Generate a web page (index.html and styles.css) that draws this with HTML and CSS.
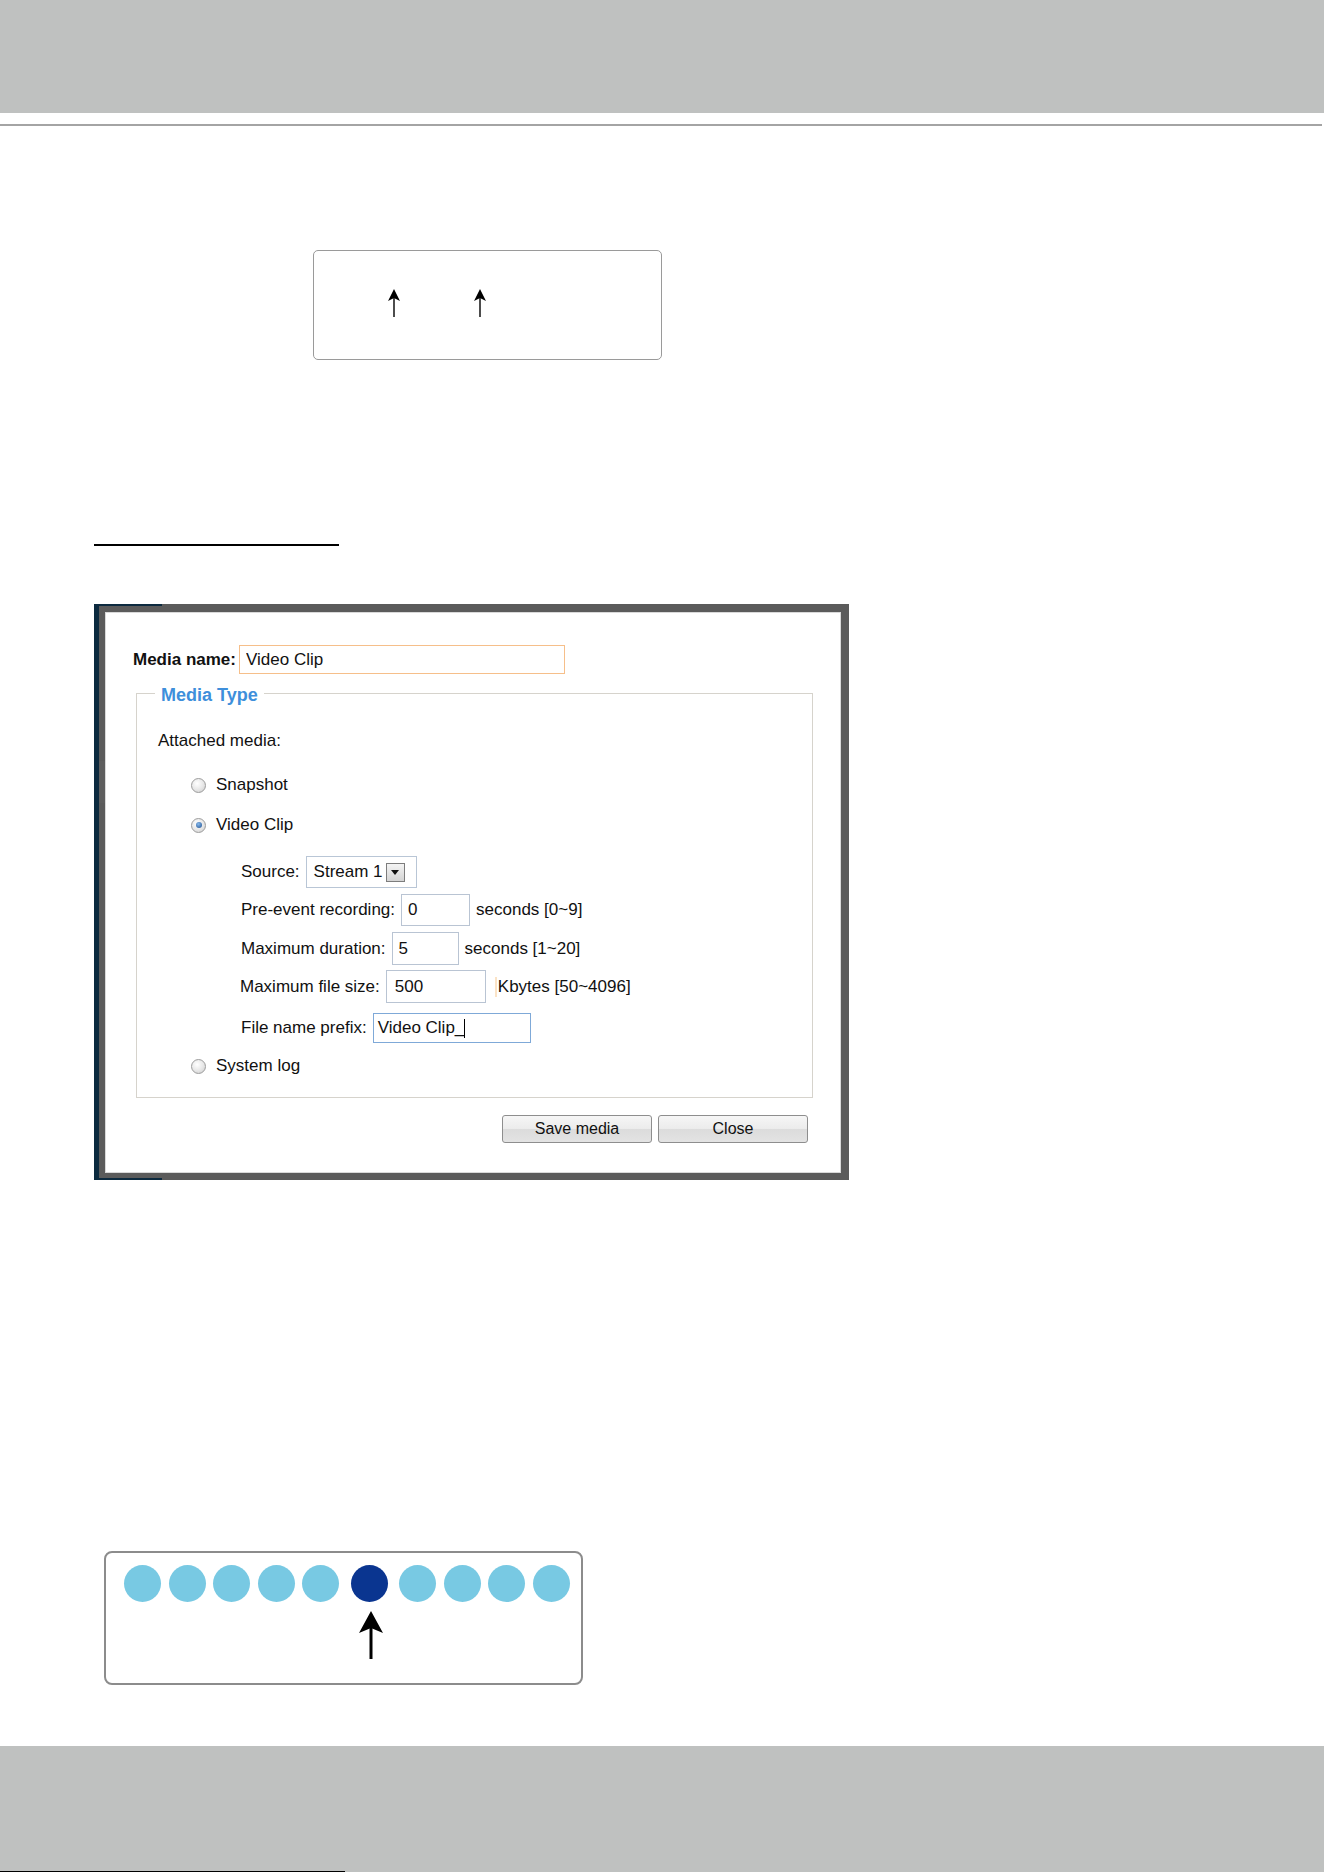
FILE: index.html
```html
<!DOCTYPE html>
<html lang="en">
<head>
<meta charset="utf-8">
<title>Media settings</title>
<link rel="stylesheet" href="styles.css">
</head>
<body>
<header class="page-head"></header>
<div class="head-rule"></div>

<div class="diagram diagram-top">
  <svg class="arrow-sm" viewBox="0 0 12 28" width="12" height="28" aria-hidden="true">
    <path d="M6 0 L12 12 L6 9 L0 12 Z" fill="#000"/>
    <line x1="6" y1="9" x2="6" y2="28" stroke="#000" stroke-width="1.4"/>
  </svg>
  <svg class="arrow-sm arrow-sm-2" viewBox="0 0 12 28" width="12" height="28" aria-hidden="true">
    <path d="M6 0 L12 12 L6 9 L0 12 Z" fill="#000"/>
    <line x1="6" y1="9" x2="6" y2="28" stroke="#000" stroke-width="1.4"/>
  </svg>
</div>

<div class="section-rule"></div>

<div class="dialog">
  <div class="dialog-body">
    <div class="name-row">
      <label class="name-label" for="media-name">Media name:</label>
      <input id="media-name" class="field field-name" type="text" value="Video Clip">
    </div>

    <fieldset class="media-type">
      <legend>Media Type</legend>
      <div class="row row-attached">Attached media:</div>
      <label class="row radio-row row-snap"><span class="radio"></span>Snapshot</label>
      <label class="row radio-row row-clip"><span class="radio radio-on"></span>Video Clip</label>

      <div class="sub row-source">
        <span>Source:</span>
        <span class="select"><span class="select-text">Stream 1</span><span class="select-btn"><svg viewBox="0 0 8 5" width="8" height="5" aria-hidden="true"><path d="M0 0 H8 L4 5 Z" fill="#111"/></svg></span></span>
      </div>
      <div class="sub row-pre">
        <span>Pre-event recording:</span>
        <span class="field field-pre">0</span>
        <span class="hint">seconds [0~9]</span>
      </div>
      <div class="sub row-dur">
        <span>Maximum duration:</span>
        <span class="field field-dur">5</span>
        <span class="hint">seconds [1~20]</span>
      </div>
      <div class="sub row-size">
        <span>Maximum file size:</span>
        <span class="field field-size">500</span>
        <span class="hint hint-mark">Kbytes [50~4096]</span>
      </div>
      <div class="sub row-prefix">
        <span>File name prefix:</span>
        <span class="field field-prefix">Video Clip_<span class="caret"></span></span>
      </div>

      <label class="row radio-row row-log"><span class="radio"></span>System log</label>
    </fieldset>

    <div class="actions">
      <button class="btn" type="button">Save media</button>
      <button class="btn" type="button">Close</button>
    </div>
  </div>
</div>

<div class="diagram diagram-dots">
  <div class="dots">
    <span class="dot"></span>
    <span class="dot"></span>
    <span class="dot"></span>
    <span class="dot"></span>
    <span class="dot"></span>
    <span class="dot dot-active"></span>
    <span class="dot"></span>
    <span class="dot"></span>
    <span class="dot"></span>
    <span class="dot"></span>
  </div>
  <svg class="arrow-lg" viewBox="0 0 24 48" width="24" height="48" aria-hidden="true">
    <path d="M12 0 L24 22 L12 17 L0 22 Z" fill="#000"/>
    <line x1="12" y1="17" x2="12" y2="48" stroke="#000" stroke-width="3"/>
  </svg>
</div>

<footer class="page-foot"><div class="foot-rule"></div></footer>
</body>
</html>
```

FILE: styles.css
```css
html, body {
  margin: 0;
  padding: 0;
  background: #fff;
}

body {
  width: 1324px;
  height: 1872px;
  position: relative;
  font-family: "Liberation Sans", Arial, sans-serif;
  color: #111;
}

/* page header band and rule */
.page-head {
  height: 113px;
  background: #bfc1c0;
}

.head-rule {
  margin-top: 11px;
  width: 1322px;
  height: 2px;
  background: #a4a4a4;
}

/* small outlined diagram with two arrows */
.diagram-top {
  margin: 124px 0 0 313px;
  width: 349px;
  height: 110px;
  box-sizing: border-box;
  border: 1.5px solid #9a9a9a;
  border-radius: 5px;
  display: flex;
  align-items: flex-start;
  padding: 38px 0 0 74px;
}

.arrow-sm {
  display: block;
}

.arrow-sm-2 {
  margin-left: 74px;
}

.section-rule {
  margin: 184px 0 0 94px;
  width: 245px;
  height: 2px;
  background: #000;
}

/* dialog window capture */
.dialog {
  position: relative;
  margin: 58px 0 0 94px;
  width: 755px;
  box-sizing: border-box;
  padding: 8px 8px 7px 6px;
  border-left: 5px solid #0c2a3f;
  background:
    linear-gradient(#5e5e5e, #5e5e5e) left 0 top 157px / 6px 42px no-repeat,
    #5b5b5b;
}

.dialog::before,
.dialog::after {
  content: "";
  position: absolute;
  left: -5px;
  width: 68px;
  background: #0c2a3f;
}

.dialog::before {
  top: 0;
  height: 2px;
}

.dialog::after {
  bottom: 0;
  height: 2px;
}

.dialog-body {
  background: #fff;
  height: 561px;
  box-sizing: border-box;
  border: 1px solid #d9d9d9;
  padding: 32px 28px 0 27px;
  font-size: 17px;
}

.name-row {
  display: flex;
  align-items: center;
  gap: 3px;
  height: 29px;
}

.name-label {
  font-weight: bold;
  font-size: 17px;
  color: #111;
}

.field {
  box-sizing: border-box;
  font: inherit;
  font-size: 17px;
  color: #111;
  background: #fff;
  border: 1px solid #b9c4d3;
  padding: 0 6px;
  display: flex;
  align-items: center;
}

.field-name {
  width: 326px;
  height: 29px;
  border-color: #f6bf8a;
  outline: none;
}

.media-type {
  margin: 7px 0 0 3px;
  width: 677px;
  box-sizing: border-box;
  border: 1px solid #d6d3cc;
  padding: 23px 0 19px 0;
  min-width: 0;
}

.media-type legend {
  margin-left: 18px;
  padding: 3px 6px 0;
  font-weight: bold;
  font-size: 18px;
  line-height: 22px;
  color: #3e8fdb;
}

.row {
  display: flex;
  align-items: center;
  height: 24px;
}

.row-attached {
  margin-left: 21px;
}

.radio-row {
  margin-left: 54px;
  gap: 10px;
}

.row-snap { margin-top: 20px; }
.row-clip { margin-top: 16px; }
.row-log { margin-top: 11px; }

.radio {
  width: 15px;
  height: 15px;
  box-sizing: border-box;
  border-radius: 50%;
  border: 1px solid #9c9c9c;
  background: radial-gradient(circle at 40% 35%, #ffffff 0, #e6e6e6 55%, #c9c9c9 100%);
  display: inline-flex;
  align-items: center;
  justify-content: center;
}

.radio-on::after {
  content: "";
  width: 6px;
  height: 6px;
  border-radius: 50%;
  background: radial-gradient(circle at 40% 35%, #86b9ec, #1f4f8f);
}

.sub {
  display: flex;
  align-items: center;
  margin-left: 104px;
  gap: 6px;
}

.row-source { margin-top: 19px; height: 32px; }
.row-pre { margin-top: 6px; height: 32px; }
.row-dur { margin-top: 6px; height: 33px; }
.row-size { margin-top: 5px; height: 33px; margin-left: 103px; }
.row-prefix { margin-top: 10px; height: 30px; }

.select {
  box-sizing: border-box;
  width: 111px;
  height: 32px;
  border: 1px solid #b9c6d6;
  display: flex;
  align-items: center;
  padding: 0 4px 0 7px;
  gap: 3px;
}

.select-btn {
  width: 19px;
  height: 19px;
  box-sizing: border-box;
  border: 1px solid #7d7d7d;
  background: linear-gradient(#f4f4f4, #d4d4d4);
  display: flex;
  align-items: center;
  justify-content: center;
}

.field-pre { width: 69px; height: 32px; }
.field-dur { width: 67px; height: 33px; }
.field-size { width: 100px; height: 33px; padding-left: 8px; }

.row-size .hint { margin-left: 3px; }

.hint-mark {
  border-left: 2px solid #fbe3c6;
  padding-left: 1px;
}

.field-prefix {
  width: 158px;
  height: 30px;
  border-color: #7fa9d8;
  padding-left: 4px;
}

.caret {
  display: inline-block;
  width: 1px;
  height: 19px;
  background: #000;
  margin-left: 0;
}

.actions {
  display: flex;
  justify-content: flex-end;
  gap: 6px;
  margin: 17px 4px 0 0;
}

.btn {
  width: 150px;
  height: 28px;
  box-sizing: border-box;
  border: 1px solid #8e8e8e;
  border-radius: 3px;
  background: linear-gradient(#f6f6f6 0, #ececec 48%, #dcdcdc 52%, #e3e3e3 100%);
  font-family: "Liberation Sans", Arial, sans-serif;
  font-size: 16px;
  color: #111;
  padding: 0;
}

/* row of position dots */
.diagram-dots {
  margin: 371px 0 0 104px;
  width: 479px;
  height: 134px;
  box-sizing: border-box;
  border: 2px solid #8c8c8c;
  border-radius: 8px;
  padding: 12px 0 0 18px;
}

.dots {
  display: flex;
  gap: 7.5px;
}

.dot {
  width: 37px;
  height: 37px;
  border-radius: 50%;
  background: #78c9e3;
}

.dot-active {
  background: #0a3590;
  margin: 0 4px;
}

.arrow-lg {
  display: block;
  margin: 9px 0 0 235px;
}

/* footer band */
.page-foot {
  position: absolute;
  left: 0;
  right: 0;
  bottom: 0;
  height: 126px;
  background: #bfc1c0;
}

.foot-rule {
  position: absolute;
  left: 0;
  bottom: 0;
  width: 345px;
  height: 1px;
  background: #000;
}
```
